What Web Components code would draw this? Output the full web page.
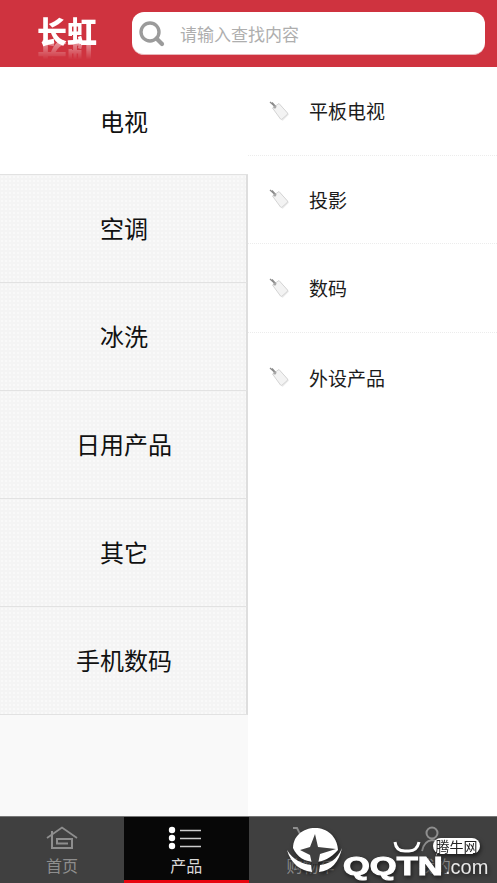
<!DOCTYPE html>
<html lang="zh">
<head>
<meta charset="utf-8">
<title>长虹</title>
<style>
	html, body { margin: 0; height: 100%; }
	body { font-family: "Liberation Sans", "Noto Sans CJK SC", sans-serif; background: #fff; }
	phone-app { height: 883px; }
</style>
</head>
<body>
<phone-app>
	<app-header></app-header>
	<category-rail slot="rail">
		<category-item selected>电视</category-item>
		<category-item>空调</category-item>
		<category-item>冰洗</category-item>
		<category-item>日用产品</category-item>
		<category-item>其它</category-item>
		<category-item>手机数码</category-item>
	</category-rail>
	<sub-list slot="list">
		<sub-item>平板电视</sub-item>
		<sub-item>投影</sub-item>
		<sub-item>数码</sub-item>
		<sub-item>外设产品</sub-item>
	</sub-list>
	<tab-bar slot="tabs">
		<tab-item icon="home">首页</tab-item>
		<tab-item icon="list" active>产品</tab-item>
		<tab-item icon="cart">购物车</tab-item>
		<tab-item icon="user">我的</tab-item>
	</tab-bar>
	<qqtn-mark slot="tabs"></qqtn-mark>
</phone-app>
<script>
class PhoneApp extends HTMLElement {
	constructor() {
		super();
		const shadow = this.attachShadow({ mode: "open" });
		shadow.innerHTML = `
      <style>
        :host { display: flex; flex-direction: column; width: 497px; overflow: hidden; position: relative; }
        .middle { flex: 1; display: flex; min-height: 0; }
      </style>
      <slot></slot>
      <div class="middle">
        <slot name="rail"></slot>
        <slot name="list"></slot>
      </div>
      <slot name="tabs"></slot>
    `;
	}
}
customElements.define("phone-app", PhoneApp);

class AppHeader extends HTMLElement {
	constructor() {
		super();
		const shadow = this.attachShadow({ mode: "open" });
		shadow.innerHTML = `
      <style>
        :host { display: flex; align-items: center; height: 67px; background: #cf333f; padding-left: 37px; padding-right: 12px; box-sizing: border-box; flex: none; }
        .logo { width: 60px; margin-right: 35px; margin-bottom: 8px; font: 900 30px/30px "Noto Sans CJK SC", sans-serif; color: #fff; white-space: nowrap; -webkit-box-reflect: below -5px linear-gradient(transparent 35%, rgba(255,255,255,.55)); }
        .search { flex: 1; height: 43px; margin-top: -1px; background: #fff; border-radius: 12px; border-bottom: 1px solid #e9b6ba; box-sizing: border-box; display: flex; align-items: center; padding-left: 6px; }
        svg { display: block; margin-right: 15px; margin-top: 2px; }
        .hint { font: 17px "Noto Sans CJK SC", sans-serif; color: #aeaeae; margin-top: 2px; }
      </style>
      <div class="logo">长虹</div>
      <div class="search">
        <svg width="27" height="27" viewBox="0 0 27 27" fill="none" stroke="#9b9b9b">
          <circle cx="12" cy="12" r="9" stroke-width="3.4"/>
          <path d="M18.5 18.5 L24 24" stroke-width="4.2" stroke-linecap="round"/>
        </svg>
        <span class="hint">请输入查找内容</span>
      </div>
    `;
	}
}
customElements.define("app-header", AppHeader);

class CategoryRail extends HTMLElement {
	constructor() {
		super();
		const shadow = this.attachShadow({ mode: "open" });
		shadow.innerHTML = `
      <style>
        :host { display: flex; flex-direction: column; width: 248px; flex: none; background: #f9f9f9; }
      </style>
      <slot></slot>
    `;
	}
}
customElements.define("category-rail", CategoryRail);

class CategoryItem extends HTMLElement {
	constructor() {
		super();
		const shadow = this.attachShadow({ mode: "open" });
		shadow.innerHTML = `
      <style>
        :host {
          display: flex; align-items: center; justify-content: center;
          height: 108px; box-sizing: border-box; padding-left: 2px; padding-bottom: 2px;
          font: 24px "Noto Sans CJK SC", sans-serif; color: #111;
          background-color: #f4f4f4;
          background-image: radial-gradient(#f9f9f9 1px, transparent 1px);
          background-size: 4px 4px;
          border-bottom: 1px solid #e2e2e2;
          border-right: 2px solid #dedede;
        }
        :host([selected]) { background: #fff; border-right: none; padding-left: 0; padding-bottom: 1px; }
      </style>
      <slot></slot>
    `;
	}
}
customElements.define("category-item", CategoryItem);

class SubList extends HTMLElement {
	constructor() {
		super();
		const shadow = this.attachShadow({ mode: "open" });
		shadow.innerHTML = `
      <style>
        :host { display: flex; flex-direction: column; flex: 1; background: #fff; }
      </style>
      <slot></slot>
    `;
	}
}
customElements.define("sub-list", SubList);

class SubItem extends HTMLElement {
	constructor() {
		super();
		const shadow = this.attachShadow({ mode: "open" });
		shadow.innerHTML = `
      <style>
        :host {
          display: flex; align-items: center; height: 88.6px; box-sizing: border-box;
          padding-left: 21px;
          font: 19px "Noto Sans CJK SC", sans-serif; color: #1c1c1c;
          border-bottom: 1px dotted #ececec;
        }
        :host(:last-child) { border-bottom: none; }
        svg { display: block; margin-right: 20px; flex: none; }
      </style>
      <svg width="20" height="20" viewBox="0 0 20 20">
        <path d="M5 8.500 L11 3.500 L20 13.500 L13.500 20 Z" fill="#ddd" opacity=".6"/>
        <path d="M3.500 7 L10 2.500 L18.500 12 Q19 13 18.200 13.600 L13 18.200 Q12.200 18.800 11.500 18 Z" fill="#f3f3f3" stroke="#cfcfcf" stroke-width=".9"/>
        <path d="M1 1 L6 5.500 M3 1.500 L7 6" stroke="#8a8a8a" stroke-width="1.300"/>
        <circle cx="5.800" cy="6" r="1.500" fill="#a8a8a8"/>
      </svg>
      <slot></slot>
    `;
	}
}
customElements.define("sub-item", SubItem);

class TabBar extends HTMLElement {
	constructor() {
		super();
		const shadow = this.attachShadow({ mode: "open" });
		shadow.innerHTML = `
      <style>
        :host { display: grid; grid-template-columns: repeat(4, 1fr); height: 67px; flex: none; background: #404040; border-top: 1px solid #777; box-sizing: border-box; }
      </style>
      <slot></slot>
    `;
	}
}
customElements.define("tab-bar", TabBar);

const TAB_ICONS = {
	home: `<path d="M3 12 L18 1.500 L33 12" fill="none" stroke="currentColor" stroke-width="1.800"/><path d="M8 5 V22 H28 V13 H13 V17.500 H24" fill="none" stroke="currentColor" stroke-width="2"/>`,
	list: `<circle cx="4" cy="4" r="3.200" fill="#fff"/><circle cx="4" cy="12" r="3.200" fill="#fff"/><circle cx="4" cy="20" r="3.200" fill="#fff"/><path d="M12 4.500 H33 M12 12.500 H33 M12 20.500 H33" stroke="#ccc" stroke-width="1.600"/>`,
	cart: `<path d="M0 2 H4 L10 14 H28 L32 6" fill="none" stroke="currentColor" stroke-width="1.800"/><circle cx="12" cy="22" r="2" fill="currentColor"/><circle cx="26" cy="22" r="2" fill="currentColor"/>`,
	user: `<circle cx="15" cy="7" r="5.500" fill="none" stroke="currentColor" stroke-width="2"/><path d="M5 25 Q7 15 15 14 Q25 15 29 25" fill="none" stroke="currentColor" stroke-width="1.800"/>`
};

class TabItem extends HTMLElement {
	constructor() {
		super();
		const shadow = this.attachShadow({ mode: "open" });
		shadow.innerHTML = `
      <style>
        :host { display: flex; flex-direction: column; align-items: center; box-sizing: border-box; padding-top: 9px; color: #8e8e8e; font: 16px/20px "Noto Sans CJK SC", sans-serif; }
        :host([active]) { background: #070707; color: #d8d8d8; border-bottom: 3px solid #e8050f; }
        svg { display: block; width: 36px; height: 26px; margin-bottom: 3px; }
      </style>
      <svg viewBox="0 0 36 26">${TAB_ICONS[this.getAttribute("icon")] || ""}</svg>
      <slot></slot>
    `;
	}
}
customElements.define("tab-item", TabItem);

// watermark sits over the tab bar
class QqtnMark extends HTMLElement {
	constructor() {
		super();
		const shadow = this.attachShadow({ mode: "open" });
		shadow.innerHTML = `
      <style>
        :host { display: block; position: absolute; left: 287px; top: 826px; width: 205px; height: 57px; color: #fff; filter: drop-shadow(1px 2px 2px #1a1a1a); }
        svg { position: absolute; left: 0; top: 0; }
        .brand { position: absolute; left: 56px; top: 23px; font: 700 25px/34px "Liberation Sans", sans-serif; color: #fff; -webkit-text-stroke: 1px #fff; white-space: nowrap; transform: scaleX(1.38); transform-origin: left center; }
        .dom { position: absolute; left: 158px; top: 28px; font: 20px/26px "Liberation Sans", sans-serif; color: #e8e8e8; }
        .bubble { position: absolute; left: 146px; top: 12px; width: 47px; height: 16px; border-radius: 8px; background: #fff; color: #222; font: 14px/16px "Noto Sans CJK SC", sans-serif; text-align: center; white-space: nowrap; }
      </style>
      <svg width="150" height="50" viewBox="0 0 150 50">
        <path d="M6 22 C6 10 16 2 28 2 C40 2 50 10 51 24 C44 32 36 36 28 36 C18 36 10 31 6 22 Z" fill="#fff"/>
        <path d="M28 8 L31 21 L49 23 L33 28 L31 38 L25 38 L23 29 L13 24 L23 21 Z" fill="#404040"/>
        <path d="M0 24 C6 34 16 38 24 39 L25 46 C14 45 4 38 0 24 Z M55 22 C50 34 42 38 33 39 L32 46 C44 45 52 36 55 22 Z" fill="#fff"/>
        <path d="M108 16 q1 9 10 9 h4 q8 0 10 -9" fill="none" stroke="#fff" stroke-width="3"/>
        <path d="M149 27 L151 33 L156 27 Z" fill="#fff"/>
      </svg>
      <div class="brand">QQTN</div>
      <div class="dom">.com</div>
      <div class="bubble">腾牛网</div>
    `;
	}
}
customElements.define("qqtn-mark", QqtnMark);
</script>
</body>
</html>
